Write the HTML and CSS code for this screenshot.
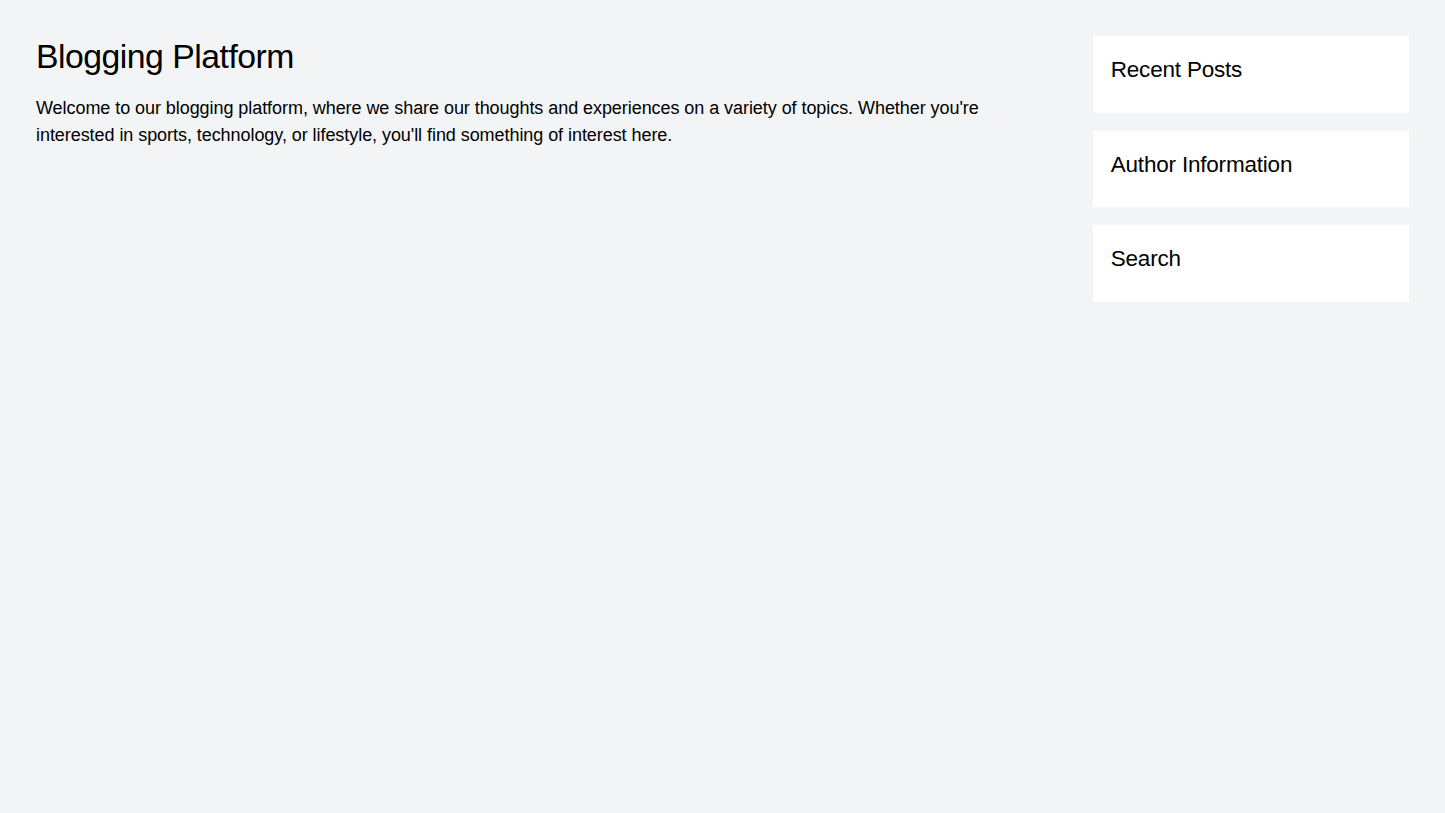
FILE: index.html
```html
<!DOCTYPE html>
<html lang="en">
<head>
<meta charset="utf-8">
<title>Blogging Platform</title>
<link rel="stylesheet" href="styles.css">
</head>
<body>
<div class="page">
  <main class="main">
    <h1 class="title">Blogging Platform</h1>
    <p class="intro">Welcome to our blogging platform, where we share our thoughts and experiences on a variety of topics. Whether you're interested in sports, technology, or lifestyle, you'll find something of interest here.</p>
  </main>
  <aside class="sidebar">
    <section class="widget"><h2 class="widget-title">Recent Posts</h2></section>
    <section class="widget"><h2 class="widget-title">Author Information</h2></section>
    <section class="widget"><h2 class="widget-title">Search</h2></section>
  </aside>
</div>
</body>
</html>
```
FILE: styles.css
```css
html, body {
  margin: 0;
  padding: 0;
}
body {
  background: #f3f4f6;
  color: #000;
  font-family: "Liberation Sans", Arial, sans-serif;
  font-size: 18px;
  line-height: 1.5;
  min-height: 813px;
}
.page {
  display: flex;
  padding: 36px;
  align-items: flex-start;
}
.main {
  flex: 0 0 75%;
  box-sizing: border-box;
  padding-right: 27px;
}
.title {
  margin: 0 0 18px;
  font-size: 33.75px;
  line-height: 40.5px;
  font-weight: 400;
  letter-spacing: -0.5px;
}
.intro {
  margin: 0;
  font-size: 18px;
  line-height: 27px;
  letter-spacing: -0.06px;
}
.sidebar {
  flex: 1 1 auto;
  padding-left: 27px;
  display: flex;
  flex-direction: column;
  gap: 18px;
}
.widget {
  background: #fff;
  padding: 18px;
}
.widget-title {
  margin: 0 0 9px;
  font-size: 22.5px;
  line-height: 31.5px;
  font-weight: 400;
  letter-spacing: -0.2px;
}
```
